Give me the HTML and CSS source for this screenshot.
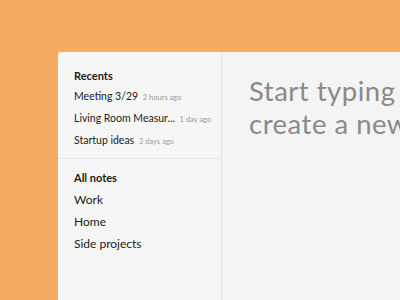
FILE: index.html
```html
<!DOCTYPE html>
<html>
    <head>
        <meta charset="utf-8">
        <title>Notes</title>
        <link rel="stylesheet" href="styles.css">
    </head>
    <body>
        <div class="window">
            <aside class="sidebar">
                <section class="group recents">
                    <h2>Recents</h2>
                    <ul>
                        <li>Meeting 3/29 <span class="ago">2 hours ago</span></li>
                        <li>Living Room Measur... <span class="ago">1 day ago</span></li>
                        <li>Startup ideas <span class="ago">3 days ago</span></li>
                    </ul>
                </section>
                <section class="group notes">
                    <h2>All notes</h2>
                    <ul>
                        <li>Work</li>
                        <li>Home</li>
                        <li>Side projects</li>
                    </ul>
                </section>
            </aside>
            <main class="editor">
                <p class="placeholder">Start typing<br>create a new</p>
            </main>
        </div>
    </body>
</html>
```

FILE: styles.css
```css
html, body {
    height: 100%;
}

body {
    margin: 0;
    padding: 52px 0 0 58px;
    box-sizing: border-box;
    background-color: #f6ad62;
    font-family: Lato, "Open Sans", sans-serif;
    overflow: hidden;
}

.window {
    display: flex;
    width: 342px;
    height: 248px;
    background-color: #f4f4f4;
    border-top-left-radius: 3px;
    overflow: hidden;
}

.sidebar {
    width: 163px;
    flex: none;
    background-color: #f6f6f6;
    border-right: 1px solid #e4e4e4;
}

.group {
    padding: 0 0 0 16px;
}

.group h2 {
    margin: 0;
    font-size: 11px;
    font-weight: bold;
    color: #1a1a1a;
}

.group ul {
    margin: 0;
    padding: 0;
    list-style: none;
}

.recents {
    padding-top: 17px;
    padding-bottom: 9px;
    border-bottom: 1px solid #e6e6e6;
}

.recents h2 {
    line-height: 14px;
}

.recents li {
    margin-top: 6px;
    font-size: 10.5px;
    line-height: 14px;
    color: #222;
}

.ago {
    margin-left: 2px;
    font-size: 7.5px;
    color: #999;
}

.notes {
    padding-top: 12px;
}

.notes h2 {
    line-height: 14px;
}

.notes li {
    margin-top: 7px;
    font-size: 12px;
    line-height: 15px;
    color: #222;
}

.editor {
    flex: 1;
    min-width: 0;
    padding: 22px 0 0 27px;
}

.placeholder {
    margin: 0;
    font-size: 27.5px;
    line-height: 33px;
    letter-spacing: 0.5px;
    white-space: nowrap;
    color: #8a8a8a;
}
```
